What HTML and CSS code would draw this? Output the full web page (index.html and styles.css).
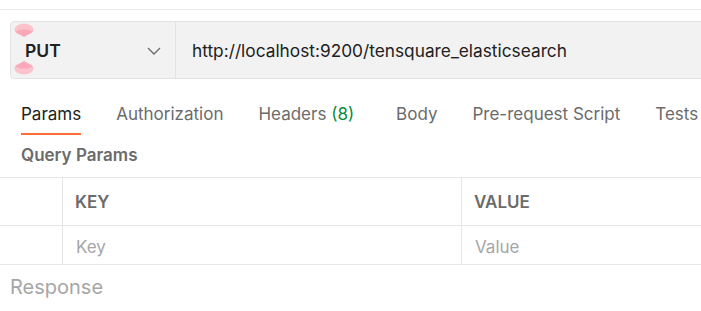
FILE: index.html
```html
<!DOCTYPE html>
<html lang="en">
<head>
  <meta charset="UTF-8">
  <title>PUT tensquare_elasticsearch</title>
  <link rel="stylesheet" href="styles.css">
</head>
<body>
  <div class="topbar"></div>

  <div class="urlbar">
    <div class="method">
      <span class="method-name">PUT</span>
      <svg class="chevron" width="14" height="8" viewBox="0 0 14 8">
        <path d="M1 1 L7 7 L13 1" fill="none" stroke="#6b6b6b" stroke-width="1.3"/>
      </svg>
      <svg class="handle handle-top" width="20" height="15" viewBox="0 0 20 15">
        <ellipse cx="10" cy="6.5" rx="9.5" ry="6" fill="#fcc3cd"/>
        <path d="M1 8.5 Q10 4 19 8.5 L10 14 Z" fill="#f9a8b8"/>
      </svg>
      <svg class="handle handle-bottom" width="20" height="15" viewBox="0 0 20 15">
        <ellipse cx="10" cy="8.5" rx="9.5" ry="6" fill="#fcc3cd"/>
        <path d="M1 6.5 L10 1 L19 6.5 Q10 11 1 6.5 Z" fill="#f9a8b8"/>
      </svg>
    </div>
    <div class="url">http://localhost:9200/tensquare_elasticsearch</div>
  </div>

  <div class="tabs">
    <div class="tab active">Params</div>
    <div class="tab">Authorization</div>
    <div class="tab tab-wide">Headers <span class="count">(8)</span></div>
    <div class="tab">Body</div>
    <div class="tab">Pre-request Script</div>
    <div class="tab">Tests</div>
  </div>

  <div class="section-title">Query Params</div>

  <div class="params">
    <div class="row head">
      <div class="cell check"></div>
      <div class="cell key">KEY</div>
      <div class="cell value">VALUE</div>
    </div>
    <div class="row">
      <div class="cell check"></div>
      <div class="cell key placeholder">Key</div>
      <div class="cell value placeholder">Value</div>
    </div>
  </div>

  <div class="response">Response</div>
</body>
</html>
```

FILE: styles.css
```css
body {
  margin: 0;
  font-family: Inter, "Noto Sans", sans-serif;
  background-color: #fff;
  color: #212121;
  overflow: hidden;
  width: 701px;
}
.topbar {
  height: 9px;
  border-bottom: 1px solid #ebebeb;
}
.urlbar {
  display: flex;
  height: 56px;
  margin: 11px -20px 0 10px;
  background-color: #f2f2f2;
  border: 1px solid #e3e3e3;
  border-radius: 4px;
}
.method {
  position: relative;
  width: 165px;
  flex-shrink: 0;
  display: flex;
  align-items: center;
  justify-content: space-between;
  padding: 0 14px 0 14px;
  box-sizing: border-box;
  border-right: 1px solid #e3e3e3;
}
.method-name {
  font-size: 17.5px;
  font-weight: 600;
  color: #212121;
}
.chevron { margin-top: 1px; }
.handle { position: absolute; left: 3px; }
.handle-top { top: 1px; }
.handle-bottom { top: 38px; }
.url {
  display: flex;
  align-items: center;
  padding-left: 16px;
  font-size: 17.3px;
  color: #212121;
  white-space: nowrap;
}
.tabs {
  display: flex;
  gap: 35px;
  padding-left: 21px;
  margin-top: 22px;
  white-space: nowrap;
}
.tab {
  font-size: 17px;
  line-height: 20px;
  color: #6b6b6b;
  padding: 3px 0 9px;
  border-bottom: 2px solid transparent;
}
.tab.active {
  color: #212121;
  border-bottom-color: #ff6c37;
}
.tab-wide { margin-right: 7px; }
.count { color: #0b8a3c; }
.section-title {
  padding: 10px 0 0 21px;
  height: 32px;
  line-height: 20px;
  font-size: 17px;
  font-weight: 600;
  color: #6b6b6b;
}
.params {
  border-top: 1px solid #e6e6e6;
}
.row {
  display: flex;
  height: 38px;
  border-bottom: 1px solid #e6e6e6;
}
.row.head { height: 47px; }
.cell {
  display: flex;
  align-items: center;
  font-size: 17px;
  box-sizing: border-box;
}
.check {
  width: 63px;
  border-right: 1px solid #e6e6e6;
}
.key {
  width: 399px;
  padding-left: 12px;
  border-right: 1px solid #e6e6e6;
}
.value { padding-left: 12px; }
.head .cell {
  font-weight: 600;
  color: #6b6b6b;
}
.placeholder {
  color: #a6a6a6;
  padding: 3px 0 0 13px;
}
.response {
  padding: 10px 0 0 10px;
  font-size: 20px;
  line-height: 24px;
  color: #a6a6a6;
}
```
